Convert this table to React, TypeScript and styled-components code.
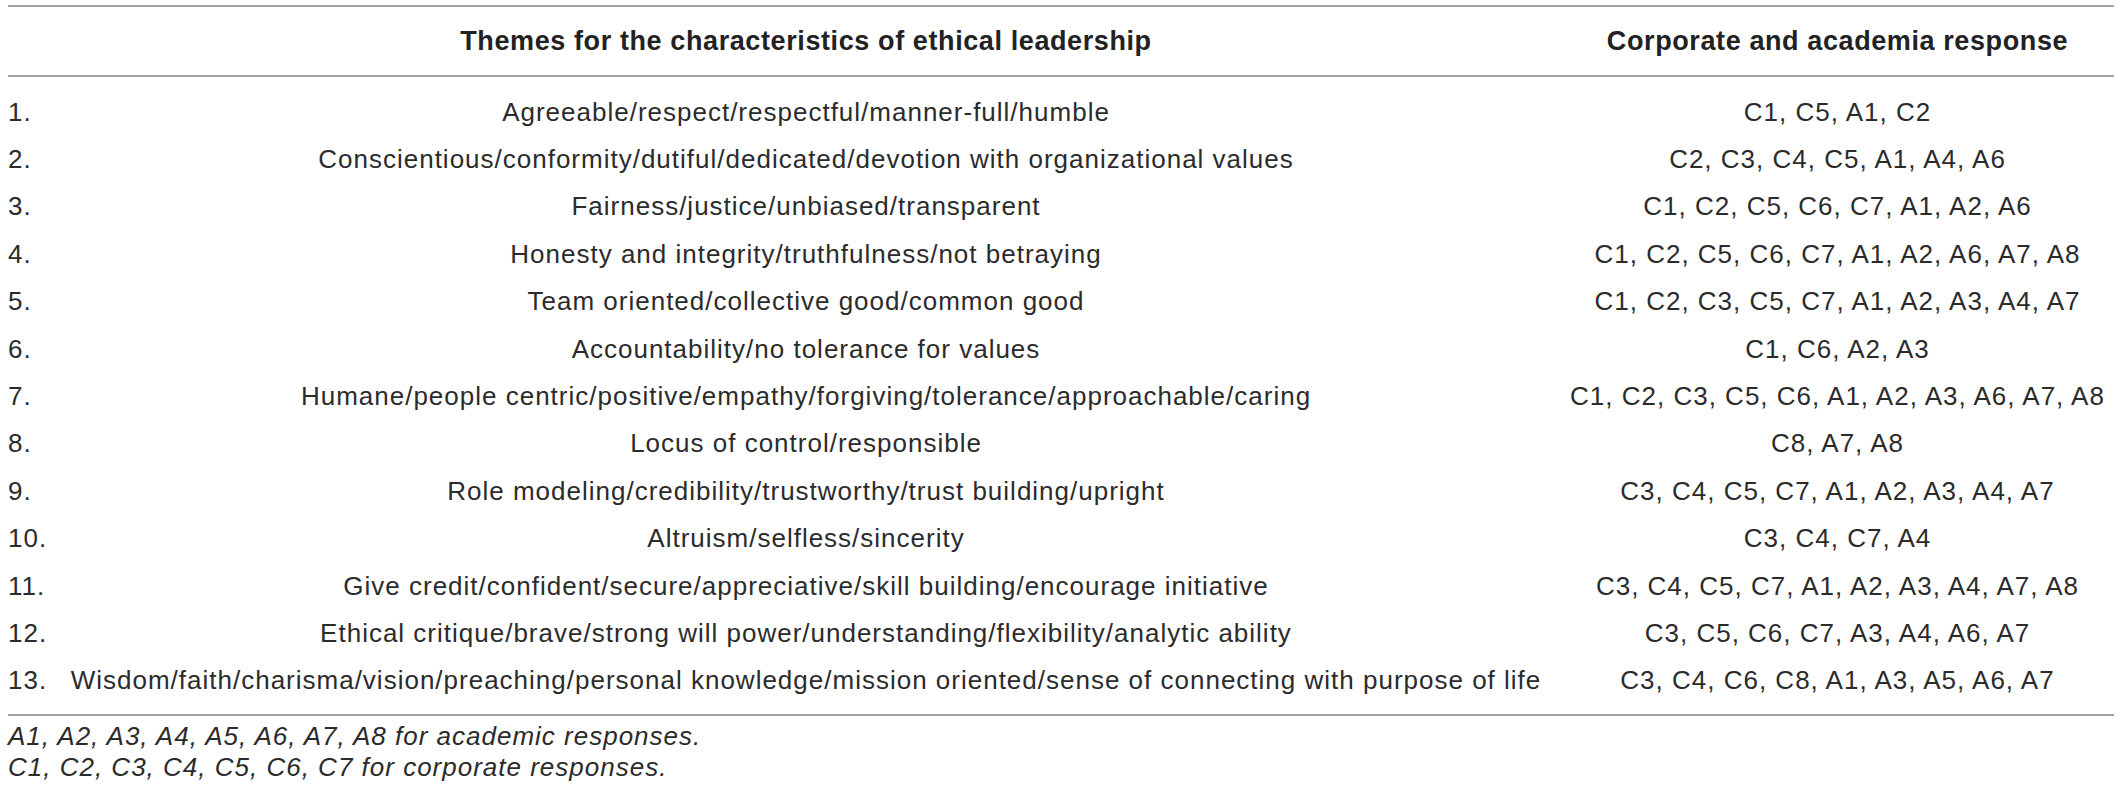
import React from 'react';
import styled, { createGlobalStyle } from 'styled-components';

const GlobalStyle = createGlobalStyle`
  html, body {
    margin: 0;
    padding: 0;
    background: #ffffff;
  }
  body {
    font-family: 'Liberation Sans', Arial, sans-serif;
    color: #2b2b2b;
  }
`;

const Page = styled.div`
  width: 2106px;
  padding: 5px 0 0 8px;
`;

const Table = styled.div`
  border-top: 2px solid #a3a3a3;
  border-bottom: 2px solid #a3a3a3;
`;

const Grid = styled.div<{ head?: boolean }>`
  display: grid;
  grid-template-columns: 43px 1510px 1fr;
  align-items: center;
  height: ${(p) => (p.head ? '68px' : '47.4px')};
`;

const HeadRow = styled(Grid)`
  border-bottom: 2px solid #a3a3a3;
  font-weight: 700;
  color: #222;
`;

const Body = styled.div`
  padding: 11px 0 10px;
`;

const Cell = styled.div<{ align?: 'left' | 'center'; bold?: boolean }>`
  font-size: ${(p) => (p.bold ? '27px' : '26px')};
  line-height: 30px;
  letter-spacing: ${(p) => (p.bold ? '0.6px' : '1px')};
  white-space: nowrap;
  text-align: ${(p) => p.align || 'center'};
`;

const Notes = styled.div`
  padding-top: 5px;
`;

const Note = styled.div`
  font-size: 26px;
  line-height: 31px;
  letter-spacing: 1px;
  font-style: italic;
`;

const rows: [string, string][] = [
  ['Agreeable/respect/respectful/manner-full/humble', 'C1, C5, A1, C2'],
  ['Conscientious/conformity/dutiful/dedicated/devotion with organizational values', 'C2, C3, C4, C5, A1, A4, A6'],
  ['Fairness/justice/unbiased/transparent', 'C1, C2, C5, C6, C7, A1, A2, A6'],
  ['Honesty and integrity/truthfulness/not betraying', 'C1, C2, C5, C6, C7, A1, A2, A6, A7, A8'],
  ['Team oriented/collective good/common good', 'C1, C2, C3, C5, C7, A1, A2, A3, A4, A7'],
  ['Accountability/no tolerance for values', 'C1, C6, A2, A3'],
  ['Humane/people centric/positive/empathy/forgiving/tolerance/approachable/caring', 'C1, C2, C3, C5, C6, A1, A2, A3, A6, A7, A8'],
  ['Locus of control/responsible', 'C8, A7, A8'],
  ['Role modeling/credibility/trustworthy/trust building/upright', 'C3, C4, C5, C7, A1, A2, A3, A4, A7'],
  ['Altruism/selfless/sincerity', 'C3, C4, C7, A4'],
  ['Give credit/confident/secure/appreciative/skill building/encourage initiative', 'C3, C4, C5, C7, A1, A2, A3, A4, A7, A8'],
  ['Ethical critique/brave/strong will power/understanding/flexibility/analytic ability', 'C3, C5, C6, C7, A3, A4, A6, A7'],
  ['Wisdom/faith/charisma/vision/preaching/personal knowledge/mission oriented/sense of connecting with purpose of life', 'C3, C4, C6, C8, A1, A3, A5, A6, A7'],
];

export default function App() {
  return (
    <Page>
      <GlobalStyle />
      <Table>
        <HeadRow head>
          <Cell align="left" bold />
          <Cell bold>Themes for the characteristics of ethical leadership</Cell>
          <Cell bold>Corporate and academia response</Cell>
        </HeadRow>
        <Body>
          {rows.map(([theme, resp], i) => (
            <Grid key={i}>
              <Cell align="left">{i + 1}.</Cell>
              <Cell>{theme}</Cell>
              <Cell>{resp}</Cell>
            </Grid>
          ))}
        </Body>
      </Table>
      <Notes>
        <Note>A1, A2, A3, A4, A5, A6, A7, A8 for academic responses.</Note>
        <Note>C1, C2, C3, C4, C5, C6, C7 for corporate responses.</Note>
      </Notes>
    </Page>
  );
}
